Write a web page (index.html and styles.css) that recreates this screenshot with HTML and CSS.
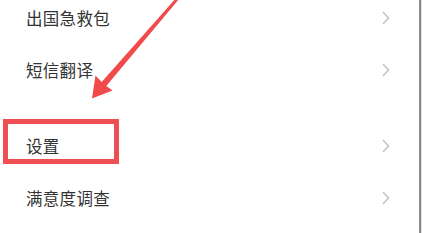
FILE: index.html
```html
<!DOCTYPE html>
<html lang="zh-CN">
<head>
<meta charset="utf-8">
<link rel="stylesheet" href="styles.css">
</head>
<body>
<div class="page">
  <div class="list">
    <div class="group">
      <div class="row"><span class="label">出国急救包</span><span class="chev"><svg width="8" height="14" viewBox="0 0 8 14"><path d="M1 1 L6.5 7 L1 13" fill="none" stroke="#c4c4c4" stroke-width="1.6"/></svg></span></div>
      <div class="row"><span class="label">短信翻译</span><span class="chev"><svg width="8" height="14" viewBox="0 0 8 14"><path d="M1 1 L6.5 7 L1 13" fill="none" stroke="#c4c4c4" stroke-width="1.6"/></svg></span></div>
    </div>
    <div class="group">
      <div class="row"><span class="label">设置</span><span class="chev"><svg width="8" height="14" viewBox="0 0 8 14"><path d="M1 1 L6.5 7 L1 13" fill="none" stroke="#c4c4c4" stroke-width="1.6"/></svg></span></div>
      <div class="row"><span class="label">满意度调查</span><span class="chev"><svg width="8" height="14" viewBox="0 0 8 14"><path d="M1 1 L6.5 7 L1 13" fill="none" stroke="#c4c4c4" stroke-width="1.6"/></svg></span></div>
    </div>
  </div>
  <div class="highlight"></div>
  <svg class="arrow" width="422" height="233" viewBox="0 0 422 233">
    <polygon points="176.9,-2.9 179.1,-1.1 106.3,86 112.5,90.5 92,98.5 95.5,75.5 101.7,82" fill="#f04a4c"/>
  </svg>
</div>
</body>
</html>
```
FILE: styles.css
```css
html, body {
  margin: 0;
  padding: 0;
  background: #ffffff;
}
.page {
  position: relative;
  width: 419px;
  height: 233px;
  overflow: hidden;
  border-right: 2px solid #8c8c8c;
  box-shadow: 1px 0 0 #dcdcdc;
  font-family: "Noto Sans CJK SC", "Noto Sans", sans-serif;
}
.list {
  margin-top: -8px;
  display: flex;
  flex-direction: column;
  gap: 24px;
}
.group {
  display: flex;
  flex-direction: column;
}
.row {
  height: 52px;
  display: flex;
  align-items: center;
  justify-content: space-between;
  padding: 0 29px 0 26px;
}
.label {
  font-size: 16.5px;
  color: #333333;
  letter-spacing: 0.3px;
}
.chev {
  display: flex;
  align-items: center;
}
.highlight {
  position: absolute;
  left: 3px;
  top: 119px;
  width: 106px;
  height: 35px;
  border: 5px solid #ef4f52;
}
.arrow {
  position: absolute;
  left: 0;
  top: 0;
}
```
